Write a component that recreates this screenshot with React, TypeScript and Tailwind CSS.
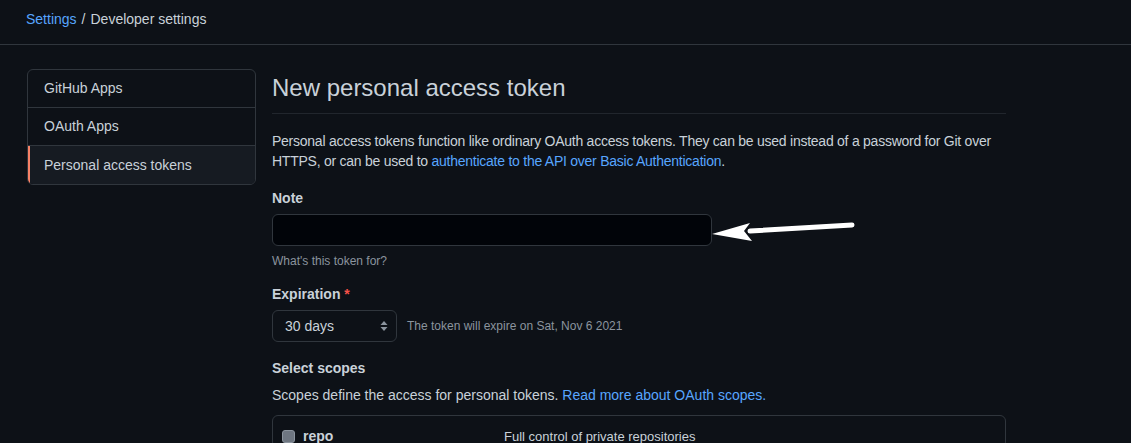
export default function App() {
  const font = { fontFamily: '"Segoe UI", "Liberation Sans", Arial, sans-serif' };
  return (
    <div className="h-[443px] w-[1131px] overflow-hidden bg-[#0d1117] text-[#c9d1d9]" style={font}>
      {/* breadcrumb */}
      <div className="flex h-[45px] items-start border-b border-[#30363d] pl-[26px] pt-[9px] text-[14px]">
        <a className="text-[#58a6ff]">Settings</a>
        <span className="mx-[5px] text-[#c9d1d9]">/</span>
        <span>Developer settings</span>
      </div>

      <div className="flex gap-4 pl-[27px] pt-6">
        {/* side nav */}
        <nav className="w-[229px] shrink-0 self-start overflow-hidden rounded-md border border-[#30363d] text-[14px]">
          <div className="flex h-[38px] items-center border-b border-[#30363d] pl-4">GitHub Apps</div>
          <div className="flex h-[38px] items-center border-b border-[#30363d] pl-4">OAuth Apps</div>
          <div className="flex h-[38px] items-center border-l-2 border-[#f78166] bg-[#161b22] pl-[14px]">
            Personal access tokens
          </div>
        </nav>

        {/* main */}
        <main className="w-[734px]">
          <h2 className="border-b border-[#21262d] pb-[9px] pt-[3px] text-[24px] font-normal leading-[32px]">
            New personal access token
          </h2>
          <div className="mt-[17px] text-[14px] leading-[20px] tracking-[-0.25px]">
            <p>Personal access tokens function like ordinary OAuth access tokens. They can be used instead of a password for Git over</p>
            <p>
              HTTPS, or can be used to <a className="text-[#58a6ff]">authenticate to the API over Basic Authentication</a>
              <span>.</span>
            </p>
          </div>

          <div className="mt-[17px]">
            <label className="block text-[14px] font-semibold leading-[20px]">Note</label>
            <div className="relative mt-[6px]">
              <input className="h-[32px] w-[440px] rounded-md border border-[#30363d] bg-[#010409] px-3 text-[14px] outline-none" />
              <svg className="absolute left-[434px] top-[2px]" width="150" height="30" viewBox="0 0 150 30">
                <path d="M146 9 L44 15" stroke="white" strokeWidth="5" strokeLinecap="round" fill="none" />
                <path d="M6 18 L44 7 L38 15 L46 25 Z" fill="white" />
              </svg>
            </div>
            <p className="mt-[6px] text-[12px] leading-[18px] text-[#8b949e]">What's this token for?</p>
          </div>

          <div className="mt-[14px]">
            <label className="block text-[14px] font-semibold leading-[20px]">
              Expiration <span className="text-[#f85149]">*</span>
            </label>
            <div className="mt-[6px] flex items-center gap-[10px]">
              <div className="flex h-[32px] w-[125px] items-center justify-between rounded-md border border-[#30363d] bg-[#0d1117] pl-3 pr-2 text-[14px]">
                <span>30 days</span>
                <svg width="8" height="12" viewBox="0 0 8 12">
                  <path d="M4 1 L7.5 5 H0.5 Z M4 11 L0.5 7 H7.5 Z" fill="#8b949e" />
                </svg>
              </div>
              <span className="text-[12px] text-[#8b949e]">The token will expire on Sat, Nov 6 2021</span>
            </div>
          </div>

          <div className="mt-[16px]">
            <label className="block text-[14px] font-semibold leading-[20px]">Select scopes</label>
            <p className="mt-[7px] text-[14px] leading-[20px]">
              Scopes define the access for personal tokens.{" "}
              <a className="text-[#58a6ff]">Read more about OAuth scopes.</a>
            </p>
            <div className="mt-[10px] rounded-md border border-[#30363d]">
              <div className="flex items-center px-[9px] pt-[10px] text-[14px]">
                <span className="flex w-[222px] items-center gap-[8px]">
                  <span className="h-[13px] w-[13px] rounded-[3px] border border-[#8b949e] bg-[#6e7681]" />
                  <span className="font-semibold">repo</span>
                </span>
                <span className="text-[13px] text-[#c9d1d9]">Full control of private repositories</span>
              </div>
            </div>
          </div>
        </main>
      </div>
    </div>
  );
}
